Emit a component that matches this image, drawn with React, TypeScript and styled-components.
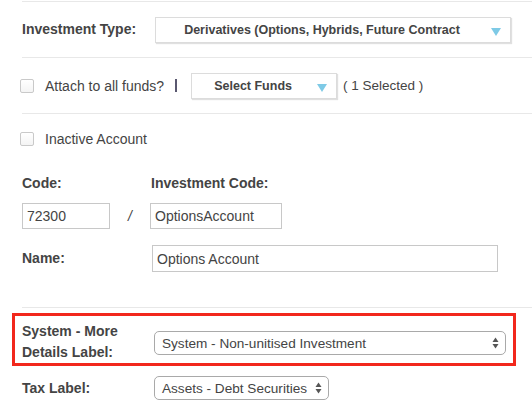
import React from "react";
import styled, { createGlobalStyle } from "styled-components";

const GlobalStyle = createGlobalStyle`
  body {
    margin: 0;
    background: #fff;
    font-family: "Liberation Sans", Arial, sans-serif;
    color: #444;
  }
`;

const Page = styled.div`
  width: 532px;
  height: 409px;
  overflow: hidden;
  padding-left: 22px;
  box-sizing: border-box;
`;

const Divider = styled.div<{ $gap?: number }>`
  height: 1px;
  background: #e8e8e8;
  margin-top: ${(p) => p.$gap ?? 0}px;
`;

const Row = styled.div<{ $height: number; $top?: number }>`
  display: flex;
  align-items: center;
  height: ${(p) => p.$height}px;
  margin-top: ${(p) => p.$top ?? 0}px;
`;

const Label = styled.div<{ $width?: number }>`
  width: ${(p) => (p.$width ? `${p.$width}px` : "auto")};
  flex-shrink: 0;
  font-size: 14px;
  font-weight: bold;
  color: #444;
  line-height: 21px;
`;

const DropBox = styled.div<{ $width: number }>`
  position: relative;
  width: ${(p) => p.$width}px;
  height: 26px;
  box-sizing: border-box;
  border: 1px solid #dcdcdc;
  box-shadow: 1px 1px 1px rgba(0, 0, 0, 0.12);
  background: #fff;
  display: flex;
  align-items: center;
  justify-content: center;
  padding-right: 22px;
  font-size: 12.5px;
  font-weight: bold;
  color: #444;
`;

const Caret = styled.span`
  position: absolute;
  right: 9px;
  top: 10px;
  width: 0;
  height: 0;
  border-left: 5px solid transparent;
  border-right: 5px solid transparent;
  border-top: 8px solid #7ecae6;
`;

const Check = styled.span`
  width: 14px;
  height: 14px;
  box-sizing: border-box;
  border: 1px solid #c9c9c9;
  border-radius: 2px;
  background: linear-gradient(#fff, #f4f4f4);
  flex-shrink: 0;
  margin-left: -2px;
  margin-right: 11px;
`;

const Text = styled.span`
  font-size: 14px;
  color: #444;
`;

const Bar = styled.span`
  width: 2px;
  height: 13px;
  background: #5a5870;
  margin: 0 14px 0 11px;
`;

const Count = styled.span`
  font-size: 13.5px;
  color: #444;
  margin-left: 6px;
`;

const Field = styled.input<{ $width: number; $height?: number }>`
  width: ${(p) => p.$width}px;
  height: ${(p) => p.$height ?? 26}px;
  box-sizing: border-box;
  border: 1px solid #c8c8c8;
  padding: 0 4px;
  font-family: "Liberation Sans", Arial, sans-serif;
  font-size: 14px;
  color: #444;
  outline: none;
`;

const Slash = styled.span`
  width: 40px;
  text-align: center;
  font-size: 14px;
  font-style: italic;
  color: #444;
`;

const HighlightSlot = styled.div`
  height: 58px;
  padding-top: 5px;
  box-sizing: border-box;
`;

const Highlight = styled.div`
  margin-left: -10px;
  width: 504px;
  height: 53px;
  box-sizing: border-box;
  border: 3px solid #f2281c;
  padding: 5px 0 0 7px;
  display: flex;
  align-items: flex-start;
`;

const Picker = styled.div<{ $width: number; $top?: number }>`
  width: ${(p) => p.$width}px;
  height: 24px;
  margin-top: ${(p) => p.$top ?? 0}px;
  box-sizing: border-box;
  border: 1px solid #a9a9a9;
  border-radius: 5px;
  background: #fff;
  display: flex;
  align-items: center;
  justify-content: space-between;
  padding: 0 6px 0 7px;
  font-size: 13.6px;
  color: #444;
`;

const Arrows = () => (
  <svg width="7" height="12" viewBox="0 0 7 12">
    <path d="M3.5 0.5 L6.5 5 H0.5 Z" fill="#555" />
    <path d="M3.5 11.5 L6.5 7 H0.5 Z" fill="#555" />
  </svg>
);

const App = () => {
  return (
    <>
      <GlobalStyle />
      <Page>
        <Divider $gap={1} />
        <Row $height={55}>
          <Label $width={133}>Investment Type:</Label>
          <DropBox $width={356}>
            Derivatives (Options, Hybrids, Future Contract
            <Caret />
          </DropBox>
        </Row>
        <Divider />
        <Row $height={55}>
          <Check />
          <Text>Attach to all funds?</Text>
          <Bar />
          <DropBox $width={146}>
            Select Funds
            <Caret />
          </DropBox>
          <Count>( 1 Selected )</Count>
        </Row>
        <Divider />
        <Row $height={49}>
          <Check />
          <Text>Inactive Account</Text>
        </Row>
        <Row $height={40}>
          <Label $width={129}>Code:</Label>
          <Label>Investment Code:</Label>
        </Row>
        <Row $height={26}>
          <Field $width={88} defaultValue="72300" readOnly />
          <Slash>/</Slash>
          <Field $width={132} defaultValue="OptionsAccount" readOnly />
        </Row>
        <Row $height={27} $top={16}>
          <Label $width={130}>Name:</Label>
          <Field $width={346} $height={27} defaultValue="Options Account" readOnly />
        </Row>
        <Divider $gap={35} />
        <HighlightSlot>
          <Highlight>
            <Label $width={132}>
              System - More
              <br />
              Details Label:
            </Label>
            <Picker $width={352} $top={10}>
              System - Non-unitised Investment
              <Arrows />
            </Picker>
          </Highlight>
        </HighlightSlot>
        <Row $height={24} $top={10}>
          <Label $width={132}>Tax Label:</Label>
          <Picker $width={175}>
            Assets - Debt Securities
            <Arrows />
          </Picker>
        </Row>
      </Page>
    </>
  );
};

export default App;
